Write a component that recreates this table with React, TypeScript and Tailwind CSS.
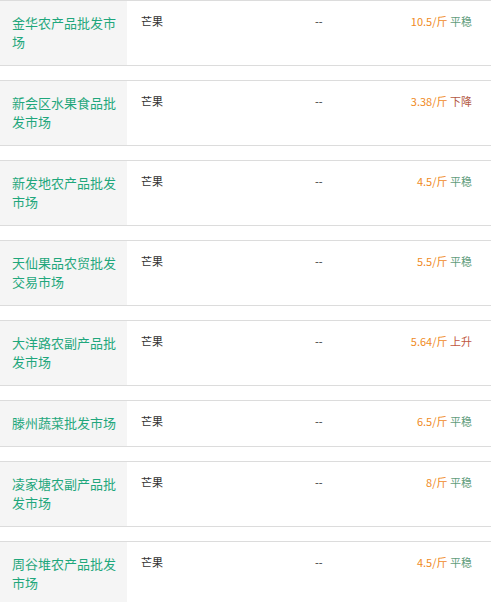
const rows = [
  { market: "金华农产品批发市场", product: "芒果", price: "10.5/斤", trend: "平稳" },
  { market: "新会区水果食品批发市场", product: "芒果", price: "3.38/斤", trend: "下降" },
  { market: "新发地农产品批发市场", product: "芒果", price: "4.5/斤", trend: "平稳" },
  { market: "天仙果品农贸批发交易市场", product: "芒果", price: "5.5/斤", trend: "平稳" },
  { market: "大洋路农副产品批发市场", product: "芒果", price: "5.64/斤", trend: "上升" },
  { market: "滕州蔬菜批发市场", product: "芒果", price: "6.5/斤", trend: "平稳" },
  { market: "凌家塘农副产品批发市场", product: "芒果", price: "8/斤", trend: "平稳" },
  { market: "周谷堆农产品批发市场", product: "芒果", price: "4.5/斤", trend: "平稳" },
];

const trendColor: Record<string, string> = {
  平稳: "text-[#5f9d7c]",
  下降: "text-[#b35a44]",
  上升: "text-[#c0573f]",
};

export default function App() {
  return (
    <div
      className="w-[491px] h-[602px] overflow-hidden bg-white"
      style={{ fontFamily: '"Noto Sans CJK SC", "Liberation Sans", sans-serif' }}
    >
      {rows.map((r, i) => (
        <div key={i} className="flex border-y border-[#dcdcdc] mb-[14px]">
          {/* market name */}
          <div className="w-[127px] shrink-0 bg-[#f5f5f5] pl-3 pr-[8px] pt-3 pb-[14px] text-[13px] leading-[19px] text-[#1fa77c]">
            {r.market}
          </div>
          {/* product */}
          <div className="w-[174px] shrink-0 pl-[14px] pt-3 text-[11px] leading-[16px] text-[#333]">
            {r.product}
          </div>
          {/* placeholder */}
          <div className="w-[100px] shrink-0 pl-[14px] pt-3 text-[11px] leading-[16px] text-[#333]">
            --
          </div>
          {/* price */}
          <div className="flex-1 pr-[19px] pt-3 text-right text-[11px] leading-[16px]">
            <span className="text-[#f08a24]">{r.price}</span>{" "}
            <span className={trendColor[r.trend]}>{r.trend}</span>
          </div>
        </div>
      ))}
    </div>
  );
}
